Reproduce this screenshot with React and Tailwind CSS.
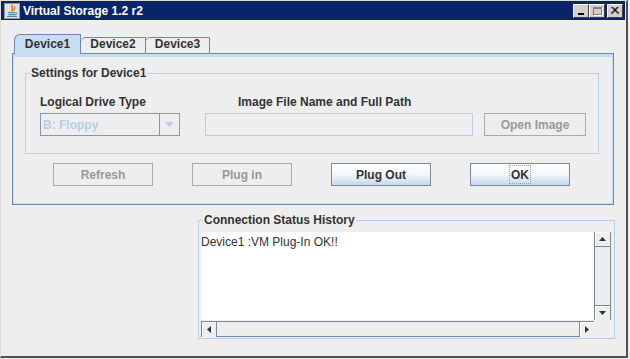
import React from "react";

function JavaIcon() {
  return (
    <svg width="16" height="16" viewBox="0 0 16 16">
      <rect x="0.5" y="0.5" width="15" height="15" fill="#e4e2dc" stroke="#9a9a9a" />
      <path d="M8.5 1.8 C6 4 10.5 5 7.5 8.2" stroke="#e76f00" strokeWidth="1.4" fill="none" />
      <path d="M10.8 3.5 C9.5 5 11.2 6 9.6 7.8" stroke="#e76f00" strokeWidth="1.1" fill="none" />
      <path d="M4 9.5 H11.5 M4.5 11.3 H11 M3 13.3 H13" stroke="#5382a1" strokeWidth="1.2" fill="none" />
      <path d="M11.5 9.5 C13.5 9.5 13.5 11.5 11 11.5" stroke="#5382a1" strokeWidth="1" fill="none" />
    </svg>
  );
}

function TitleBtn({ children, ml = "" }) {
  return (
    <div className={`w-[16px] h-[14px] bg-[#d4d0c8] border-t border-l border-t-white border-l-white border-r border-b border-r-[#404040] border-b-[#404040] flex items-center justify-center ${ml}`}>
      {children}
    </div>
  );
}

function Tri({ dir }) {
  const paths = {
    up: "M0 4 L3.5 0 L7 4 Z",
    down: "M0 0 L7 0 L3.5 4 Z",
    left: "M4 0 L4 7 L0 3.5 Z",
    right: "M0 0 L4 3.5 L0 7 Z",
  };
  const horiz = dir === "left" || dir === "right";
  return (
    <svg width={horiz ? 4 : 7} height={horiz ? 7 : 4} viewBox={horiz ? "0 0 4 7" : "0 0 7 4"}>
      <path d={paths[dir]} fill="#333333" />
    </svg>
  );
}

function SBtn({ dir, cls }) {
  return (
    <div className={`w-[15px] h-[15px] bg-[#eeeeee] flex items-center justify-center shadow-[inset_1px_1px_0_#ffffff] ${cls}`}>
      <Tri dir={dir} />
    </div>
  );
}

function Button({ label, enabled, focus }) {
  if (!enabled) {
    return (
      <div className="w-[100px] h-[23px] border border-[#ababab] bg-[#eeeeee] flex items-center justify-center text-[12px] font-bold text-[#999999] leading-[14px]">
        {label}
      </div>
    );
  }
  return (
    <div className="w-[100px] h-[23px] border border-[#7a8a99] bg-gradient-to-b from-white via-[#f3f6fa] to-[#c6d8ee] flex items-center justify-center text-[12px] font-bold text-[#333333] leading-[14px]">
      {focus ? (
        <span className="border border-dotted border-[#8aa3c4] px-[1px] h-[19px] flex items-center">{label}</span>
      ) : (
        label
      )}
    </div>
  );
}

export default function App() {
  return (
    <div className="w-[630px] h-[359px] bg-[#eeeeee] font-['Liberation_Sans',Arial,sans-serif] text-[#333333] overflow-hidden">
      <div className="w-[628px] h-[358px] border-t border-l border-[#dcdcdc] border-r-2 border-b-2 border-r-[#505050] border-b-[#505050] bg-[#eeeeee] flex flex-col">
        {/* title bar */}
        <div className="h-[19px] mr-[1px] bg-[#0a246a] flex items-center pl-[3px] pr-[2px] shrink-0">
          <JavaIcon />
          <span className="ml-[3px] text-white font-bold text-[12px] leading-[14px]">Virtual Storage 1.2 r2</span>
          <div className="flex-1" />
          <TitleBtn>
            <div className="w-[6px] h-[2px] bg-black mt-[6px] -ml-[1px]" />
          </TitleBtn>
          <TitleBtn>
            <div className="w-[9px] h-[8px] border border-t-2 border-[#808080] shadow-[1px_1px_0_#ffffff]" />
          </TitleBtn>
          <TitleBtn ml="ml-[2px]">
            <svg width="8" height="7" viewBox="0 0 8 7">
              <path d="M0.5 0 L7.5 7 M1.5 0 L8 6.5 M7.5 0 L0.5 7 M6.5 0 L0 6.5" stroke="#000" strokeWidth="1" />
            </svg>
          </TitleBtn>
        </div>

        {/* tabs */}
        <div className="mt-[14px] ml-[13px] flex items-end h-[20px] -mb-[1px] relative z-10">
          <div className="w-[67px] h-[20px] bg-[#c8ddf2] border-t border-l border-r border-[#6f86b3] rounded-tl-[6px] flex items-end justify-center pb-[3px] text-[12px] font-bold leading-[14px]">
            Device1
          </div>
          <div className="w-[65px] h-[17px] bg-[#eeeeee] border-t border-r border-b border-[#6f86b3] rounded-tl-[5px] flex items-end justify-center pb-[2px] text-[12px] font-bold leading-[14px]">
            Device2
          </div>
          <div className="w-[65px] h-[17px] bg-[#eeeeee] border-t border-r border-b border-l border-[#6f86b3] -ml-[1px] rounded-tl-[5px] flex items-end justify-center pb-[2px] text-[12px] font-bold leading-[14px]">
            Device3
          </div>
        </div>

        {/* tab panel */}
        <div className="ml-[11px] w-[602px] h-[152px] border border-[#6f86b3] shrink-0">
          <div className="h-full border-t-[3px] border-l border-r border-b border-[#c8ddf2] flex flex-col">
            {/* settings group */}
            <div className="relative mt-[16px] ml-[11px] w-[574px] h-[81px] border border-[#b8cfe5] pl-[14px] pt-[21px]">
              <span className="absolute left-[4px] -top-[8px] px-[1px] bg-[#eeeeee] text-[12px] font-bold leading-[14px]">
                Settings for Device1
              </span>
              <div className="flex text-[12px] font-bold leading-[14px]">
                <span className="w-[198px]">Logical Drive Type</span>
                <span>Image File Name and Full Path</span>
              </div>
              <div className="flex mt-[4px]">
                <div className="w-[140px] h-[23px] flex">
                  <div className="w-[120px] h-full border border-[#8494b4] flex items-center pl-[2px] text-[12px] font-bold text-[#b8cfe5]">
                    B: Floppy
                  </div>
                  <div className="w-[20px] h-full border border-l-0 border-[#9a9a9a] flex items-center justify-center">
                    <svg width="9" height="5" viewBox="0 0 9 5">
                      <path d="M0 0 H9 L4.5 5 Z" fill="#b8cfe5" />
                    </svg>
                  </div>
                </div>
                <div className="ml-[25px] w-[268px] h-[23px] border border-[#b8cfe5]" />
                <div className="ml-[11px] w-[102px] h-[23px] border border-[#ababab] flex items-center justify-center text-[12px] font-bold text-[#999999]">
                  Open Image
                </div>
              </div>
            </div>

            {/* buttons */}
            <div className="flex mt-[9px] ml-[39px] gap-[39px]">
              <Button label="Refresh" />
              <Button label="Plug in" />
              <Button label="Plug Out" enabled />
              <Button label="OK" enabled focus />
            </div>
          </div>
        </div>

        {/* status history group */}
        <div className="relative mt-[15px] ml-[197px] w-[417px] h-[119px] border border-[#b8cfe5] pl-[2px] pt-[11px] shrink-0">
          <span className="absolute left-[4px] -top-[8px] px-[1px] bg-[#eeeeee] text-[12px] font-bold leading-[14px]">
            Connection Status History
          </span>
          <div className="grid grid-cols-[393px_17px] grid-rows-[88px_17px] w-[410px]">
            <div className="bg-white pt-[3px] text-[12px] leading-[14px] text-[#333333]">Device1 :VM Plug-In OK!!</div>
            <div className="bg-[#eeeeee] border-l border-r border-[#7a8a99] flex flex-col justify-between">
              <SBtn dir="up" cls="border-b border-[#7a8a99]" />
              <SBtn dir="down" cls="border-t border-[#7a8a99]" />
            </div>
            <div className="bg-[#eeeeee] mt-[1px] border-t border-b border-[#7a8a99] flex justify-between">
              <SBtn dir="left" cls="border-r border-[#7a8a99] border-l border-l-[#7a8a99] w-[16px]" />
              <SBtn dir="right" cls="border-l border-[#7a8a99]" />
            </div>
            <div className="bg-[#eeeeee]" />
          </div>
        </div>
      </div>
    </div>
  );
}
